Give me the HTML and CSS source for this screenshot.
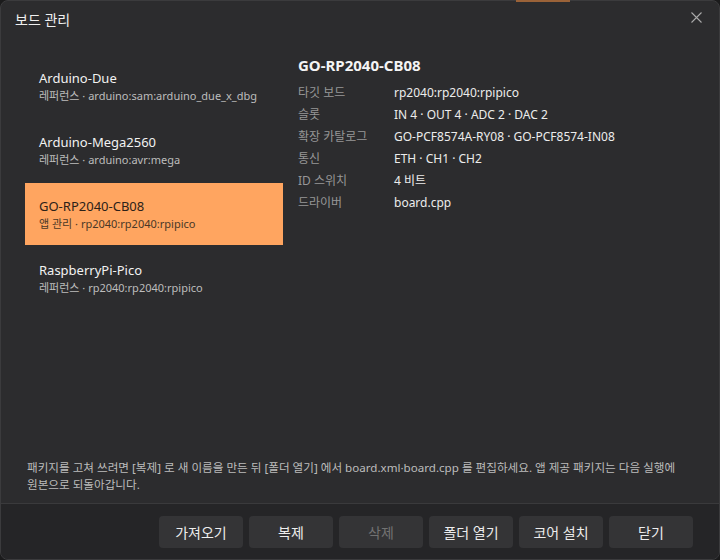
FILE: index.html
```html
<!DOCTYPE html>
<html lang="ko">
  <head>
    <title>보드 관리</title>
    <meta charset="utf-8" />
    <link rel="stylesheet" href="styles.css">
  </head>
  <body>
    <div class="tab-mark"></div>
    <div class="dialog">
      <div class="dialog-head">
        <span class="dialog-title">보드 관리</span>
        <svg class="close" width="11" height="11" viewBox="0 0 11 11">
          <path d="M0.5 0.5 L10.5 10.5 M10.5 0.5 L0.5 10.5" stroke="#a9a9a9" stroke-width="1.1" fill="none" />
        </svg>
      </div>

      <div class="dialog-body">
        <div class="columns">
          <ul class="boards">
            <li>
              <div class="board-name">Arduino-Due</div>
              <div class="board-sub">레퍼런스 · arduino:sam:arduino_due_x_dbg</div>
            </li>
            <li>
              <div class="board-name">Arduino-Mega2560</div>
              <div class="board-sub">레퍼런스 · arduino:avr:mega</div>
            </li>
            <li class="selected">
              <div class="board-name">GO-RP2040-CB08</div>
              <div class="board-sub">앱 관리 · rp2040:rp2040:rpipico</div>
            </li>
            <li>
              <div class="board-name">RaspberryPi-Pico</div>
              <div class="board-sub">레퍼런스 · rp2040:rp2040:rpipico</div>
            </li>
          </ul>

          <div class="details">
            <h2>GO-RP2040-CB08</h2>
            <dl>
              <dt>타깃 보드</dt><dd>rp2040:rp2040:rpipico</dd>
              <dt>슬롯</dt><dd>IN 4 · OUT 4 · ADC 2 · DAC 2</dd>
              <dt>확장 카탈로그</dt><dd>GO-PCF8574A-RY08 · GO-PCF8574-IN08</dd>
              <dt>통신</dt><dd>ETH · CH1 · CH2</dd>
              <dt>ID 스위치</dt><dd>4 비트</dd>
              <dt>드라이버</dt><dd>board.cpp</dd>
            </dl>
          </div>
        </div>

        <p class="notice">패키지를 고쳐 쓰려면 [복제] 로 새 이름을 만든 뒤 [폴더 열기] 에서 board.xml·board.cpp 를 편집하세요. 앱 제공 패키지는 다음 실행에 원본으로 되돌아갑니다.</p>
      </div>

      <div class="dialog-foot">
        <button>가져오기</button>
        <button>복제</button>
        <button disabled>삭제</button>
        <button>폴더 열기</button>
        <button>코어 설치</button>
        <button>닫기</button>
      </div>
    </div>
  </body>
</html>
```

FILE: styles.css
```css
html, body {
  margin: 0;
  height: 100%;
  background: #1b1b1c;
  font-family: "Noto Sans", "Noto Sans CJK KR", sans-serif;
}

.tab-mark {
  position: absolute;
  left: 516px;
  top: 0;
  width: 54px;
  height: 2px;
  background: #9a6238;
  z-index: 2;
}

.dialog {
  box-sizing: border-box;
  height: 560px;
  display: flex;
  flex-direction: column;
  background: #2c2c2e;
  border: 1px solid #3b3b3d;
  border-radius: 8px;
  overflow: hidden;
  color: #e6e6e6;
}

.dialog-head {
  height: 35px;
  display: flex;
  align-items: center;
  justify-content: space-between;
  padding: 0 17px 0 14px;
}

.dialog-title {
  font-size: 14px;
  color: #f0f0f0;
}

.close {
  display: block;
  margin-top: -3px;
}

.dialog-body {
  flex: 1;
  display: flex;
  flex-direction: column;
  padding: 19px 24px 0 24px;
}

.columns {
  flex: 1;
  display: flex;
  gap: 15px;
}

/* board list */
.boards {
  list-style: none;
  margin: 0;
  padding: 0;
  width: 258px;
  display: flex;
  flex-direction: column;
  gap: 2px;
}

.boards li {
  height: 62px;
  box-sizing: border-box;
  padding: 14px 14px 0 14px;
}

.board-name {
  font-size: 13px;
  line-height: 18px;
  color: #f2f2f2;
}

.board-sub {
  font-size: 11px;
  line-height: 15px;
  margin-top: 1px;
  color: #bdbdbd;
}

.boards li.selected {
  background: #ffa560;
}

.boards li.selected .board-name {
  color: #2b2118;
}

.boards li.selected .board-sub {
  color: #4a3826;
}

/* details panel */
.details h2 {
  margin: 0 0 6px 0;
  font-size: 15px;
  line-height: 20px;
  font-weight: bold;
  color: #f4f4f4;
}

.details dl {
  margin: 0;
  display: grid;
  grid-template-columns: 96px auto;
  grid-auto-rows: 22px;
  align-items: center;
  font-size: 12px;
}

.details dt {
  color: #979797;
}

.details dd {
  margin: 0;
  color: #ececec;
}

.notice {
  margin: 0 0 10px 2px;
  padding-right: 2px;
  font-size: 11.6px;
  line-height: 17px;
  word-break: keep-all;
  color: #bcbcbc;
}

/* button row */
.dialog-foot {
  height: 56px;
  box-sizing: border-box;
  border-top: 1px solid #3a3a3c;
  background: #252527;
  display: flex;
  justify-content: flex-end;
  gap: 6px;
  padding: 12px 26px 0 0;
}

.dialog-foot button {
  width: 84px;
  height: 32px;
  border: none;
  border-radius: 4px;
  background: #343436;
  color: #ededed;
  font-family: inherit;
  font-size: 14px;
}

.dialog-foot button:disabled {
  color: #727272;
}
```
